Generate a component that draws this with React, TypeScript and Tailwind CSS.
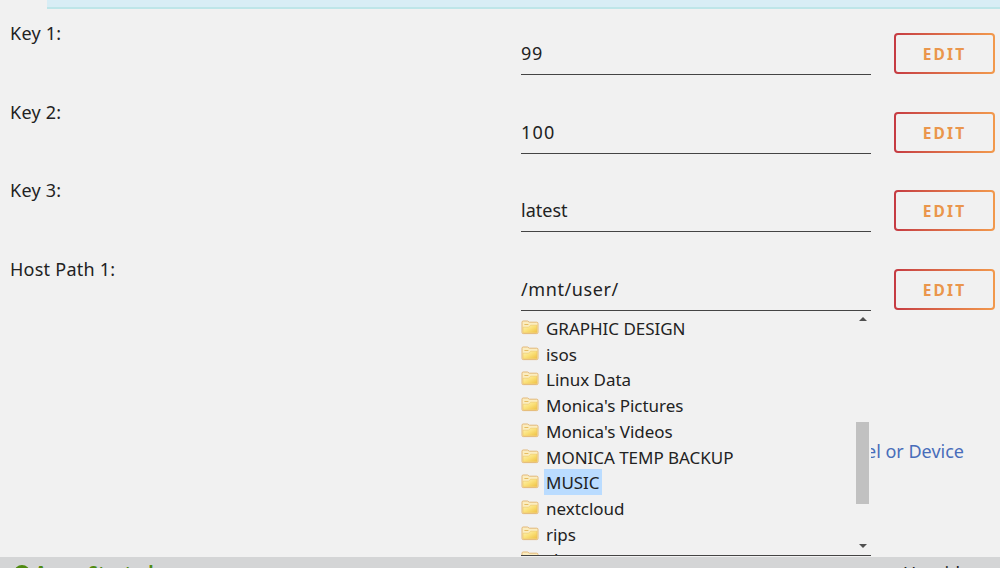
const folders = [
  "GRAPHIC DESIGN",
  "isos",
  "Linux Data",
  "Monica's Pictures",
  "Monica's Videos",
  "MONICA TEMP BACKUP",
  "MUSIC",
  "nextcloud",
  "rips",
  "shows",
];

const fields = [
  { label: "Key 1:", value: "99", tracking: "tracking-[0.6px]" },
  { label: "Key 2:", value: "100", tracking: "tracking-[1.2px]" },
  { label: "Key 3:", value: "latest", tracking: "" },
  { label: "Host Path 1:", value: "/mnt/user/", tracking: "tracking-[0.6px]" },
];

function FolderIcon() {
  return (
    <svg className="mt-[5px] h-[15px] w-[18px] shrink-0" viewBox="0 0 18 15">
      <defs>
        <linearGradient id="folder" x1="0" y1="0" x2="1" y2="1">
          <stop offset="0" stopColor="#fdf3b8" />
          <stop offset="0.5" stopColor="#fae078" />
          <stop offset="1" stopColor="#efc043" />
        </linearGradient>
      </defs>
      <path
        d="M1 2.2Q1 1 2.2 1H6.5L8.3 2.2H15.8Q17 2.2 17 3.4V12.4Q17 13.6 15.8 13.6H2.2Q1 13.6 1 12.4Z"
        fill="#fbedc0"
        stroke="#e3b878"
      />
      <path
        d="M2 7.2H7.6L9.6 5.2H16V12.8H2Z"
        fill="url(#folder)"
        stroke="#edc766"
        strokeWidth="0.6"
      />
      <path d="M3.4 4.5H7.4" stroke="#e6bd62" />
    </svg>
  );
}

function EditButton() {
  return (
    <button className="h-[41px] w-[101px] rounded-[4px] bg-linear-to-r from-[#c53a42] to-[#f2994c] p-[2px]">
      <span className="flex h-full w-full items-center justify-center rounded-[2px] bg-[#f1f1f1] pt-[2px] text-[15.5px] font-bold tracking-[2.1px] text-[#ea964c]">
        EDIT
      </span>
    </button>
  );
}

function FileTree() {
  return (
    <div className="absolute top-[42px] left-0 z-10 flex h-[245px] w-[350px] justify-between overflow-hidden border-b border-[#444] bg-[#f1f1f1]">
      <ul className="pt-1">
        {folders.map((name) => (
          <li key={name} className="flex h-[25.7px] gap-[5px]">
            <FolderIcon />
            <span
              className={
                "h-[26px] px-[2px] text-[17px] leading-[28px] tracking-[-0.03px] whitespace-nowrap " +
                (name === "MUSIC" ? "bg-[#badcff]" : "")
              }
            >
              {name}
            </span>
          </li>
        ))}
      </ul>
      <div className="mr-px flex w-[15px] flex-col items-center pt-[6px] pb-[7px]">
        <svg className="h-1 w-2" viewBox="0 0 8 4">
          <path d="M4 0L8 4H0Z" fill="#505050" />
        </svg>
        <div className="mt-[101px] h-[82px] w-[13px] bg-[#c1c1c1]" />
        <svg className="mt-auto h-1 w-2" viewBox="0 0 8 4">
          <path d="M0 0H8L4 4Z" fill="#505050" />
        </svg>
      </div>
    </div>
  );
}

export default function App() {
  return (
    <div className="flex h-[568px] w-[1000px] flex-col overflow-hidden bg-[#f1f1f1] font-['Noto_Sans',sans-serif] text-[#222]">
      <div className="ml-[47px] h-[9px] shrink-0 border-b-2 border-[#bee5e8] bg-[#d8edf5]" />
      <main className="flex h-[548px] shrink-0 flex-col pt-[12px]">
        {fields.map(({ label, value, tracking }) => (
          <div key={label} className="flex h-[78.7px] shrink-0">
            <div className="w-[521px] pl-[10px] text-[18px] leading-[24px] tracking-[0.25px]">
              {label}
            </div>
            <div className="relative mt-[12px] h-[42px] w-[350px] border-b border-[#444] text-[18px] leading-[40px]">
              <span className={tracking}>{value}</span>
              {value === "/mnt/user/" && <FileTree />}
            </div>
            <div className="ml-[23px] pt-[12px]">
              <EditButton />
            </div>
          </div>
        ))}
        <a className="mt-[101px] mr-[36px] self-end text-[18px] leading-[28px] text-[#486dba]">
          el or Device
        </a>
      </main>
      <footer className="flex h-[40px] shrink-0 justify-between bg-[#d4d5d6] pt-[4px] pl-[14px] text-[17px] leading-[24px]">
        <div className="flex gap-[5px] font-bold tracking-[0.4px] text-[#4f8a10]">
          <span className="mt-[4px] size-4 rounded-full bg-[#4f8a10]" />
          Array Started
        </div>
        <div className="w-[97px] text-[18px]">Unraid</div>
      </footer>
    </div>
  );
}
